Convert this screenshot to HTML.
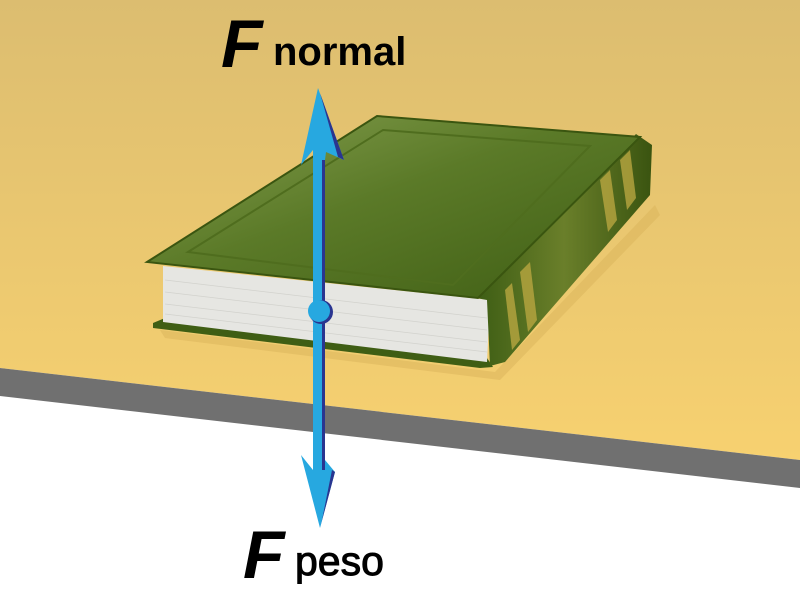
<!DOCTYPE html>
<html><head><style>
html,body{margin:0;padding:0;width:800px;height:600px;overflow:hidden;background:#fff}
</style></head><body>
<svg width="800" height="600" viewBox="0 0 800 600" xmlns="http://www.w3.org/2000/svg">
<defs>
<linearGradient id="bg" x1="0" y1="0" x2="0" y2="1">
<stop offset="0" stop-color="#dcbd70"/><stop offset="1" stop-color="#f7d170"/>
</linearGradient>
<linearGradient id="cov" x1="0" y1="0" x2="1" y2="1">
<stop offset="0" stop-color="#86a050"/><stop offset="0.45" stop-color="#5b7a28"/><stop offset="1" stop-color="#3f5e14"/>
</linearGradient>
<linearGradient id="spine" x1="0" y1="0" x2="1" y2="0">
<stop offset="0" stop-color="#3d5d14"/><stop offset="0.5" stop-color="#6a7f2a"/><stop offset="1" stop-color="#3a5410"/>
</linearGradient>
</defs>
<polygon points="0,0 800,0 800,460 0,368" fill="url(#bg)"/>
<polygon points="0,368 800,460 800,488 0,396" fill="#707070"/>
<polygon points="160,330 495,372 655,205 660,215 500,380 165,338" fill="#d9b35a" opacity="0.5"/>
<polygon points="153,323 165,318 487,358 493,367 480,368 153,328" fill="#3f5e14"/>
<polygon points="163,266 490,300 487,362 163,322" fill="#e6e6e2"/>
<g stroke="#d2d2cd" stroke-width="0.7">
<line x1="165" y1="280" x2="487" y2="318"/><line x1="165" y1="292" x2="487" y2="330"/>
<line x1="165" y1="304" x2="487" y2="342"/><line x1="165" y1="314" x2="487" y2="352"/>
</g>
<polygon points="476,298 636,134 652,145 650,195 505,362 490,366 487,300" fill="url(#spine)"/>
<g fill="#b8a640" opacity="0.8">
<polygon points="505,290 512,283 520,340 512,350"/>
<polygon points="520,272 530,262 537,320 528,332"/>
<polygon points="600,180 610,170 617,220 608,232"/>
<polygon points="620,160 630,150 636,198 627,210"/>
</g>
<polygon points="147,262 377,116 640,137 478,298" fill="url(#cov)" stroke="#3a5510" stroke-width="2"/>
<polygon points="188,252 383,130 590,146 453,285" fill="none" stroke="#4f6d1e" stroke-width="2"/>
<g>
<rect x="313" y="150" width="12" height="320" fill="#27a8e0"/>
<rect x="322" y="150" width="3" height="320" fill="#2a3590"/>
<polygon points="318,88 344,160 326,152 325,160 313,160 313,150 301,165" fill="#27a8e0"/>
<polygon points="320,93 344,160 338,157" fill="#2a3590"/>
<polygon points="320,528 301,455 313,470 325,470 325,460 335,472" fill="#27a8e0"/>
<polygon points="320,528 335,472 332,470 322,520" fill="#2a3590"/>
<circle cx="321" cy="312" r="12" fill="#2a3590"/>
<circle cx="319" cy="311" r="11" fill="#27a8e0"/>
</g>
<text x="221" y="67" font-family="Liberation Sans, sans-serif" font-weight="bold" font-style="italic" font-size="68" fill="#000">F</text>
<text x="273" y="65" font-family="Liberation Sans, sans-serif" font-weight="bold" font-size="40" fill="#000">normal</text>
<text x="243" y="578" font-family="Liberation Sans, sans-serif" font-weight="bold" font-style="italic" font-size="68" fill="#000">F</text>
<text x="295" y="575" font-family="Liberation Sans, sans-serif" font-size="41" fill="#000" stroke="#000" stroke-width="1">peso</text>
</svg>
</body></html>
